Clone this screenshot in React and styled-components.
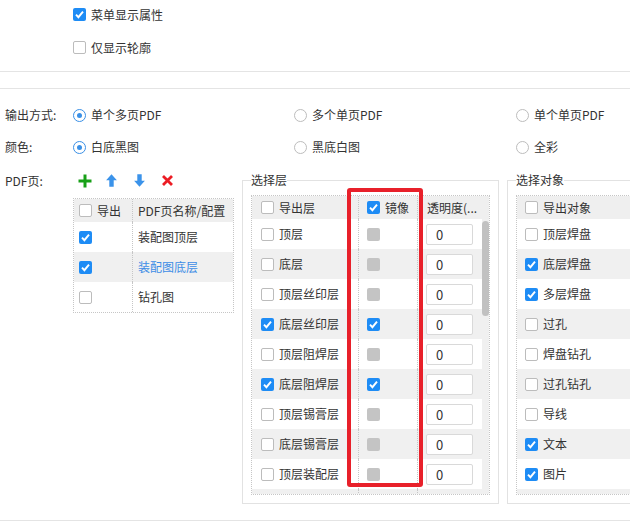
import React from "react";
import styled, { createGlobalStyle } from "styled-components";

const pdfPages = [
  { name: "装配图顶层", on: true },
  { name: "装配图底层", on: true, active: true },
  { name: "钻孔图", on: false },
];

const layers = [
  { name: "顶层", on: false },
  { name: "底层", on: false },
  { name: "顶层丝印层", on: false },
  { name: "底层丝印层", on: true },
  { name: "顶层阻焊层", on: false },
  { name: "底层阻焊层", on: true },
  { name: "顶层锡膏层", on: false },
  { name: "底层锡膏层", on: false },
  { name: "顶层装配层", on: false },
];

const objects = [
  { name: "顶层焊盘", on: false },
  { name: "底层焊盘", on: true },
  { name: "多层焊盘", on: true },
  { name: "过孔", on: false },
  { name: "焊盘钻孔", on: false },
  { name: "过孔钻孔", on: false },
  { name: "导线", on: false },
  { name: "文本", on: true },
  { name: "图片", on: true },
];

const CheckBox = ({ state }) => (
  <Check $state={state}>
    {state === "on" && (
      <svg width="9" height="9" viewBox="0 0 9 9">
        <path d="M1 4.6 L3.4 7.2 L8 1.6" stroke="#fff" strokeWidth="1.9" fill="none" />
      </svg>
    )}
  </Check>
);

const Radio = ({ on, children }) => (
  <RadioItem>
    <RadioDot $on={on} />
    {children}
  </RadioItem>
);

const App = () => {
  return (
    <Screen>
      <GlobalStyle />
      <TopOptions>
        <Option>
          <CheckBox state="on" />
          菜单显示属性
        </Option>
        <Option>
          <CheckBox state="off" />
          仅显示轮廓
        </Option>
      </TopOptions>
      <Divider $top={17} />
      <Divider $top={16} />

      <FormRows>
        <FormRow>
          <Label>输出方式:</Label>
          <Radio on>单个多页PDF</Radio>
          <Radio>多个单页PDF</Radio>
          <Radio>单个单页PDF</Radio>
        </FormRow>
        <FormRow>
          <Label>颜色:</Label>
          <Radio on>白底黑图</Radio>
          <Radio>黑底白图</Radio>
          <Radio>全彩</Radio>
        </FormRow>
      </FormRows>

      <Main>
        <PdfColumn>
          <PdfHeader>
            <Label>PDF页:</Label>
            <Tool title="添加">
              <svg width="14" height="14" viewBox="0 0 14 14">
                <path d="M7 0.5V13.5M0.5 7H13.5" stroke="#18a018" strokeWidth="3" />
              </svg>
            </Tool>
            <Tool title="上移">
              <svg width="11" height="13" viewBox="0 0 11 13">
                <path d="M5.5 0.3L10.9 6.3H7.7V12.7H3.3V6.3H0.1Z" fill="#3b93ea" />
              </svg>
            </Tool>
            <Tool title="下移">
              <svg width="11" height="13" viewBox="0 0 11 13">
                <path d="M5.5 12.7L10.9 6.7H7.7V0.3H3.3V6.7H0.1Z" fill="#3b93ea" />
              </svg>
            </Tool>
            <Tool title="删除">
              <svg width="11" height="11" viewBox="0 0 11 11">
                <path d="M1 1L10 10M10 1L1 10" stroke="#ec1c24" strokeWidth="2.8" />
              </svg>
            </Tool>
          </PdfHeader>
          <PdfTable>
            <HeadRow $cols="59px 1fr">
              <Cell $sep>
                <CheckBox state="off" />
                导出
              </Cell>
              <Cell>PDF页名称/配置</Cell>
            </HeadRow>
            {pdfPages.map((p, i) => (
              <BodyRow key={p.name} $cols="59px 1fr" $alt={i % 2 === 1}>
                <Cell $sep>
                  <CheckBox state={p.on ? "on" : "off"} />
                </Cell>
                <Cell $active={p.active}>{p.name}</Cell>
              </BodyRow>
            ))}
          </PdfTable>
        </PdfColumn>

        <Group $width="257px">
          <legend>选择层</legend>
          <Table>
            <HeadRow $cols="107px 59px 1fr">
              <Cell $sep $pad={9}>
                <CheckBox state="off" />
                导出层
              </Cell>
              <Cell $sep $pad={8}>
                <CheckBox state="on" />
                镜像
              </Cell>
              <Cell $pad={9}>透明度(...</Cell>
            </HeadRow>
            <ScrollBody>
              <Rows>
                {layers.map((l, i) => (
                  <BodyRow key={l.name} $cols="107px 59px 1fr" $alt={i % 2 === 1}>
                    <Cell $sep $pad={9}>
                      <CheckBox state={l.on ? "on" : "off"} />
                      {l.name}
                    </Cell>
                    <Cell $sep $pad={8}>
                      <CheckBox state={l.on ? "on" : "disabled"} />
                    </Cell>
                    <Cell $pad={8}>
                      <Opacity>0</Opacity>
                    </Cell>
                  </BodyRow>
                ))}
                <PartialRow $cols="107px 59px 1fr">
                  <Cell $sep />
                  <Cell $sep />
                  <Cell />
                </PartialRow>
              </Rows>
              <Track>
                <Thumb />
              </Track>
            </ScrollBody>
            <Highlight />
          </Table>
        </Group>

        <Group $width="220px" $gap="8px">
          <legend>选择对象</legend>
          <Table>
            <HeadRow $cols="1fr">
              <Cell $pad={8}>
                <CheckBox state="off" />
                导出对象
              </Cell>
            </HeadRow>
            <Rows>
              {objects.map((o, i) => (
                <BodyRow key={o.name} $cols="1fr" $alt={i % 2 === 1}>
                  <Cell $pad={8}>
                    <CheckBox state={o.on ? "on" : "off"} />
                    {o.name}
                  </Cell>
                </BodyRow>
              ))}
              <PartialRow $cols="1fr">
                <Cell />
              </PartialRow>
            </Rows>
          </Table>
        </Group>
      </Main>
      <Divider $top={16} />
    </Screen>
  );
};

export default App;

const GlobalStyle = createGlobalStyle`
  body {
    margin: 0;
    background: #fff;
    font-family: "Noto Sans CJK SC", "Noto Sans", sans-serif;
    font-size: 12px;
    color: #333;
  }
`;

const Screen = styled.div`
  width: 630px;
  height: 525px;
  overflow: hidden;
  line-height: 16px;
`;

const TopOptions = styled.div`
  display: flex;
  flex-direction: column;
  gap: 20px;
  padding: 8px 0 0 73px;
`;

const Option = styled.label`
  display: flex;
  align-items: center;
  gap: 5px;
  height: 13px;
  white-space: nowrap;
`;

const Check = styled.span`
  box-sizing: border-box;
  flex: none;
  display: inline-flex;
  align-items: center;
  justify-content: center;
  width: 13px;
  height: 13px;
  border-radius: 2px;
  background: ${(p) =>
    p.$state === "on" ? "#1e8cf5" : p.$state === "off" ? "#fff" : "#c4c4c4"};
  border: ${(p) => (p.$state === "off" ? "1px solid #bcbcbc" : "none")};
`;

const Divider = styled.div`
  height: 1px;
  margin-top: ${(p) => p.$top}px;
  background: #e4e4e4;
`;

const FormRows = styled.div`
  padding-top: 10px;
`;

const FormRow = styled.div`
  display: grid;
  grid-template-columns: 68px 221px 222px 1fr;
  align-items: center;
  height: 32px;
  padding-left: 5px;
  white-space: nowrap;
`;

const Label = styled.span`
  white-space: nowrap;
`;

const RadioItem = styled.label`
  display: flex;
  align-items: center;
  gap: 5px;
`;

const RadioDot = styled.span`
  box-sizing: border-box;
  flex: none;
  display: inline-flex;
  align-items: center;
  justify-content: center;
  width: 13px;
  height: 13px;
  border-radius: 50%;
  border: 1px solid ${(p) => (p.$on ? "#3a90e6" : "#bdbdbd")};
  background: #fff;

  &::after {
    content: "";
    display: ${(p) => (p.$on ? "block" : "none")};
    width: 5px;
    height: 5px;
    border-radius: 50%;
    background: #3a90e6;
  }
`;

const Main = styled.div`
  display: flex;
  align-items: flex-start;
`;

const PdfColumn = styled.div`
  flex: none;
  width: 242px;
`;

const PdfHeader = styled.div`
  display: grid;
  grid-template-columns: 73px 28px 28px 28px 28px;
  align-items: center;
  height: 35px;
  padding-left: 5px;
`;

const Tool = styled.span`
  display: flex;
  align-items: center;
  height: 14px;
  cursor: pointer;
`;

const PdfTable = styled.div`
  box-sizing: border-box;
  width: 161px;
  margin-left: 73px;
  border: 1px dotted #c6c6c6;
`;

const HeadRow = styled.div`
  display: grid;
  grid-template-columns: ${(p) => p.$cols};
  height: 23px;
  background: #efefef;
`;

const BodyRow = styled.div`
  display: grid;
  grid-template-columns: ${(p) => p.$cols};
  height: 30px;
  background: ${(p) => (p.$alt ? "#f0f0f0" : "#fff")};
`;

const PartialRow = styled(BodyRow)`
  background: #f0f0f0;
`;

const Cell = styled.div`
  display: flex;
  align-items: center;
  gap: 5px;
  min-width: 0;
  padding-left: ${(p) => p.$pad ?? 5}px;
  white-space: nowrap;
  overflow: hidden;
  color: ${(p) => (p.$active ? "#3d8de6" : "#333")};
  border-right: ${(p) => (p.$sep ? "1px dotted #c6c6c6" : "none")};
`;

const Group = styled.fieldset`
  box-sizing: border-box;
  flex: none;
  width: ${(p) => p.$width};
  min-width: 0;
  margin: 9px 0 0 ${(p) => p.$gap || "0px"};
  padding: 7px 9px 8px 8px;
  border: 1px solid #e2e2e2;

  legend {
    padding: 0;
    line-height: 16px;
    color: #333;
  }
`;

const Table = styled.div`
  position: relative;
  box-sizing: border-box;
  border: 1px dotted #c6c6c6;
  width: 239px;
`;

const ScrollBody = styled.div`
  display: flex;
`;

const Rows = styled.div`
  flex: 1;
  height: 275px;
  overflow: hidden;
`;

const Track = styled.div`
  flex: none;
  width: 7px;
  padding-top: 2px;
  background: #f0f0f0;
`;

const Thumb = styled.div`
  height: 95px;
  border-radius: 4px;
  background: #c1c1c1;
`;

const Opacity = styled.div`
  box-sizing: border-box;
  width: 47px;
  height: 21px;
  padding-left: 9px;
  line-height: 19px;
  border: 1px solid #d9d9d9;
  border-radius: 2px;
  background: #fff;
  font-size: 13px;
`;

const Highlight = styled.div`
  position: absolute;
  left: 95px;
  top: -8px;
  width: 76px;
  height: 299px;
  box-sizing: border-box;
  border: 4px solid #e8202a;
  border-radius: 3px;
  pointer-events: none;
`;
